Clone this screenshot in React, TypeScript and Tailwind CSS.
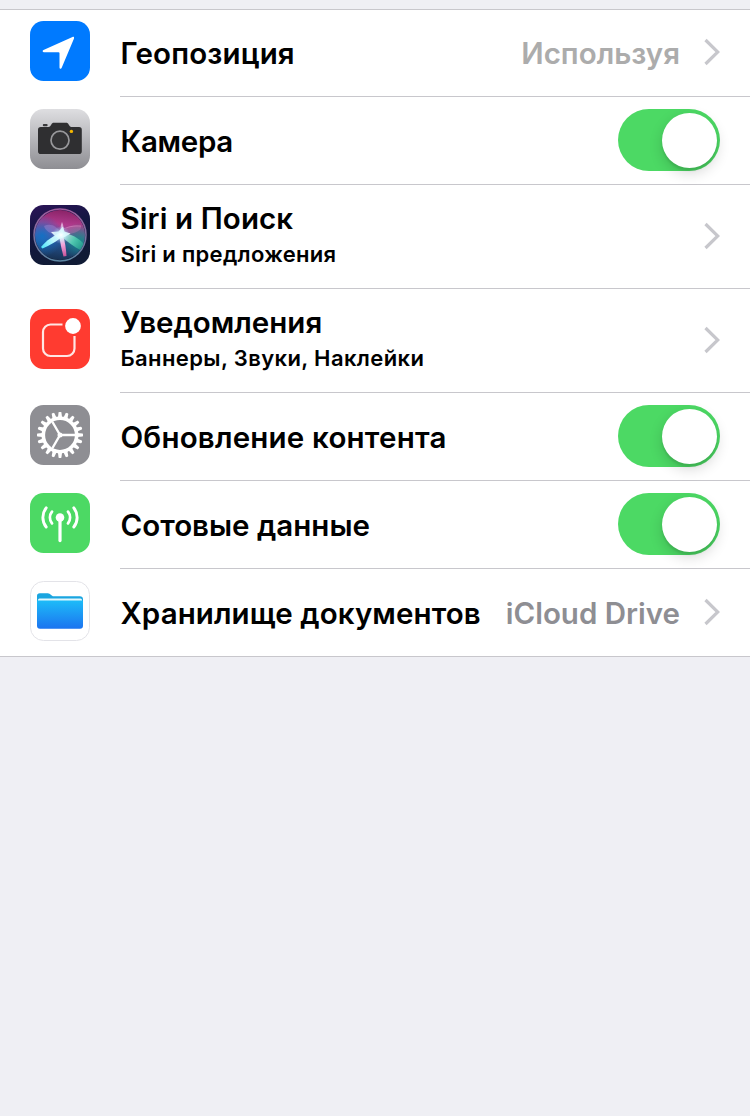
import React from 'react';
import clsx from 'clsx';

const LocationIcon = () => (
  <svg viewBox="0 0 60 60" className="size-[60px]">
    <rect width="60" height="60" rx="13.5" fill="#007aff" />
    <path d="M42.500 16c1.100-.5 1.900.3 1.500 1.400L31.700 46.800c-.6 1.300-2.200 1-2.200-.4V32.200q0-1-1-1H14c-1.600 0-1.800-1.600-.5-2.200Z" fill="#fff" />
  </svg>
);

const CameraIcon = () => (
  <svg viewBox="0 0 60 60" className="size-[60px]">
    <defs>
      <linearGradient id="cam" x1="0" y1="0" x2="0" y2="1">
        <stop offset="0" stopColor="#dedee1" />
        <stop offset="1" stopColor="#8e8e93" />
      </linearGradient>
    </defs>
    <rect width="60" height="60" rx="13.5" fill="url(#cam)" />
    <rect x="12.800" y="15" width="4.800" height="2.200" rx="1" fill="#39393b" />
    <path d="M10.800 18h7.700c1.500 0 2-1 2.700-2.200.8-1.400 1.300-2 2.800-2h12c1.500 0 2 .6 2.800 2 .7 1.200 1.200 2.200 2.700 2.200h7.500a2.800 2.800 0 0 1 2.800 2.800v21.400a2.800 2.800 0 0 1-2.800 2.800H10.800A2.800 2.800 0 0 1 8 42.200V20.800a2.800 2.800 0 0 1 2.800-2.800Z" fill="#2f2f31" />
    <circle cx="30" cy="31.200" r="9" fill="#333335" stroke="#98989b" strokeWidth="1.700" />
    <circle cx="41.400" cy="22.400" r="1.700" fill="#f5b700" />
  </svg>
);

const SiriIcon = () => (
  <svg viewBox="0 0 60 60" className="size-[60px]">
    <defs>
      <linearGradient id="siriBg" x1="0" y1="0" x2=".3" y2="1">
        <stop offset="0" stopColor="#2c1458" />
        <stop offset=".45" stopColor="#141642" />
        <stop offset="1" stopColor="#101b35" />
      </linearGradient>
      <linearGradient id="siriOrb" x1=".5" y1="0" x2=".4" y2="1">
        <stop offset="0" stopColor="#8a2468" />
        <stop offset=".28" stopColor="#b03a8c" />
        <stop offset=".5" stopColor="#7a4f9e" />
        <stop offset=".68" stopColor="#24508c" />
        <stop offset="1" stopColor="#173050" />
      </linearGradient>
      <radialGradient id="siriBlue" cx="12" cy="31" r="21" gradientUnits="userSpaceOnUse">
        <stop offset="0" stopColor="#1470c4" />
        <stop offset="1" stopColor="#1470c4" stopOpacity="0" />
      </radialGradient>
      <radialGradient id="siriTeal" cx="49" cy="36" r="18" gradientUnits="userSpaceOnUse">
        <stop offset="0" stopColor="#178a86" />
        <stop offset="1" stopColor="#178a86" stopOpacity="0" />
      </radialGradient>
      <radialGradient id="siriGlow" cx="31" cy="30" r="9" gradientUnits="userSpaceOnUse">
        <stop offset="0" stopColor="#fff" stopOpacity=".9" />
        <stop offset=".45" stopColor="#c6fbff" stopOpacity=".5" />
        <stop offset="1" stopColor="#6fd3ff" stopOpacity="0" />
      </radialGradient>
      <linearGradient id="siriLeft" x1="30" y1="30" x2="11" y2="43" gradientUnits="userSpaceOnUse">
        <stop offset="0" stopColor="#fff" />
        <stop offset="1" stopColor="#4be6fa" />
      </linearGradient>
      <linearGradient id="siriRight" x1="32" y1="30" x2="54" y2="42" gradientUnits="userSpaceOnUse">
        <stop offset="0" stopColor="#f2fffb" />
        <stop offset=".5" stopColor="#5fe3bd" />
        <stop offset="1" stopColor="#2bae92" stopOpacity=".7" />
      </linearGradient>
      <linearGradient id="siriTail" x1="30" y1="29" x2="35" y2="53" gradientUnits="userSpaceOnUse">
        <stop offset="0" stopColor="#fff" />
        <stop offset=".5" stopColor="#ee9bd4" />
        <stop offset="1" stopColor="#c2488f" />
      </linearGradient>
      <linearGradient id="siriRing" x1="0" y1="0" x2="0" y2="1">
        <stop offset="0" stopColor="#a05a9c" />
        <stop offset="1" stopColor="#5b86a3" />
      </linearGradient>
      <filter id="soft" x="-20%" y="-20%" width="140%" height="140%">
        <feGaussianBlur stdDeviation=".6" />
      </filter>
    </defs>
    <rect width="60" height="60" rx="13.5" fill="url(#siriBg)" />
    <circle cx="30" cy="30" r="25" fill="url(#siriOrb)" />
    <circle cx="30" cy="30" r="25" fill="url(#siriBlue)" />
    <circle cx="30" cy="30" r="25" fill="url(#siriTeal)" />
    <g filter="url(#soft)">
      <path d="M14 21c6-3 13-1 18 9-8 0-16-2-18-9Z" fill="#a98fdd" opacity=".4" />
      <path d="M31 29c3-7 11-10 20-8 1 5-8 9-20 8Z" fill="#d67bb6" opacity=".3" />
      <path d="M31 25.500c6-4 13-5 20-4.500" fill="none" stroke="#d98cc4" strokeWidth=".8" opacity=".7" />
      <path d="M32 17c2 4 2 8 0 13-2-4-2-9 0-13Z" fill="#f0d2f2" opacity=".7" />
      <path d="M31 27.500c-7 3-15 8-20 14.500l1.500 1.500c7-3 15-7.500 20-12Z" fill="url(#siriLeft)" />
      <path d="M32 27.500c9 1 17 6 22 11.500l-3.500 6c-6-3-13-8-18.500-13Z" fill="url(#siriRight)" opacity=".75" />
      <path d="M29 29c1 8 2.500 15 4.500 22.500l3-.5c-.5-8-1.500-15-4-22Z" fill="url(#siriTail)" />
      <path d="M21 27l7.500-.5 4.500-5 1.500 5 6 2-5 3-5 2-5-2Z" fill="#f4fdff" opacity=".9" />
      <circle cx="31" cy="30" r="9" fill="url(#siriGlow)" />
    </g>
    <circle cx="30" cy="30" r="26" fill="none" stroke="url(#siriRing)" strokeWidth="1.500" />
  </svg>
);

const NotificationsIcon = () => (
  <svg viewBox="0 0 60 60" className="size-[60px]">
    <rect width="60" height="60" rx="13.5" fill="#ff3b30" />
    <path d="M32.500 15.500H20.500a7.500 7.500 0 0 0-7.500 7.500v16.500a7.500 7.500 0 0 0 7.500 7.500H37a7.500 7.500 0 0 0 7.500-7.500V27" fill="none" stroke="#ffe6e4" strokeWidth="2.200" />
    <circle cx="43" cy="17" r="7.900" fill="#fff" />
  </svg>
);

const TEETH = Array.from({ length: 20 }, (_, i) => i * 18);

const GearIcon = () => (
  <svg viewBox="0 0 60 60" className="size-[60px]">
    <rect width="60" height="60" rx="13.5" fill="#8e8e93" />
    <g fill="none" stroke="#fff">
      <circle cx="30" cy="30" r="16.700" strokeWidth="3.600" />
      <path d="M30 30h15M30 30l-7.500-13M30 30l-7.500 13" strokeWidth="2.400" />
    </g>
    <circle cx="30" cy="30" r="2.500" fill="#fff" />
    {TEETH.map((a) => (
      <path key={a} d="M27.900 12.500 28.600 7.600q.15-.6.700-.6h1.400q.550 0 .7.600L32.100 12.500Z" transform={`rotate(${a} 30 30)`} fill="#fff" />
    ))}
  </svg>
);

const CellularIcon = () => (
  <svg viewBox="0 0 60 60" className="size-[60px]">
    <rect width="60" height="60" rx="13.5" fill="#4cd964" />
    <circle cx="30" cy="24.500" r="4.300" fill="#fff" />
    <g fill="none" stroke="#fff" strokeLinecap="round">
      <path d="M30 26v21.600" strokeWidth="3.200" />
      <path d="M22 18.700a9.300 9.300 0 0 0 0 11.600M38 18.700a9.300 9.300 0 0 1 0 11.600" strokeWidth="2.800" />
      <path d="M16.200 14.800a15.500 15.500 0 0 0 0 19.200M43.800 14.800a15.500 15.500 0 0 1 0 19.200" strokeWidth="2.900" />
    </g>
  </svg>
);

const FilesIcon = () => (
  <svg viewBox="0 0 60 60" className="size-[60px]">
    <defs>
      <linearGradient id="folder" x1="0" y1="0" x2="0" y2="1">
        <stop offset="0" stopColor="#1dbcf8" />
        <stop offset="1" stopColor="#1c74f0" />
      </linearGradient>
    </defs>
    <rect x=".5" y=".5" width="59" height="59" rx="13" fill="#fff" stroke="#e3e3e8" />
    <path d="M7 22V15a2.800 2.800 0 0 1 2.800-2.800h8c2.700 0 3.400 3.100 6 3.100h26a3.200 3.200 0 0 1 3.200 3.200V22Z" fill="#1aa5e0" />
    <path d="M9.500 17.400h41a1.500 1.500 0 0 1 1.500 1.500v2H8v-2a1.500 1.500 0 0 1 1.500-1.500Z" fill="#e3f7fd" />
    <path d="M7 19.400h46v25.300a3 3 0 0 1-3 3H10a3 3 0 0 1-3-3Z" fill="url(#folder)" />
  </svg>
);

const Chevron = () => (
  <svg viewBox="0 0 16 28" className="mt-0.5 ml-6 h-7 w-4 shrink-0">
    <path d="M1.500 2 13.800 14 1.500 26" fill="none" stroke="#c7c7cc" strokeWidth="3.200" />
  </svg>
);

const Toggle = () => (
  <button
    role="switch"
    aria-checked="true"
    className="mt-0.5 flex h-[62px] w-[102px] shrink-0 items-center justify-end rounded-full bg-[#4cd964] pr-[3px]"
  >
    <span className="size-[55px] rounded-full bg-white shadow-[0_5px_14px_rgba(0,0,0,0.16),0_3px_2px_rgba(0,0,0,0.08)]" />
  </button>
);

interface Row {
  icon: React.FC;
  title: string;
  titleClass: string;
  subtitle?: string;
  subtitleClass?: string;
  value?: string;
  valueClass?: string;
  toggle?: boolean;
}

const ROWS: Row[] = [
  { icon: LocationIcon, title: 'Геопозиция', titleClass: 'tracking-[0.15px]', value: 'Используя', valueClass: 'tracking-normal text-[#acacac]' },
  { icon: CameraIcon, title: 'Камера', titleClass: 'tracking-[-0.3px]', toggle: true },
  { icon: SiriIcon, title: 'Siri и Поиск', titleClass: 'tracking-[0.1px]', subtitle: 'Siri и предложения', subtitleClass: 'tracking-[0.3px]' },
  { icon: NotificationsIcon, title: 'Уведомления', titleClass: 'tracking-normal', subtitle: 'Баннеры, Звуки, Наклейки', subtitleClass: 'tracking-[0.38px]' },
  { icon: GearIcon, title: 'Обновление контента', titleClass: 'tracking-[0.2px]', toggle: true },
  { icon: CellularIcon, title: 'Сотовые данные', titleClass: 'tracking-normal', toggle: true },
  { icon: FilesIcon, title: 'Хранилище документов', titleClass: 'tracking-[0.1px]', value: 'iCloud Drive', valueClass: 'tracking-normal text-[#8e8e93]' },
];

const SettingsRow: React.FC<{ row: Row; last: boolean }> = ({ row, last }) => {
  const Icon = row.icon;

  return (
    <div className={clsx('flex bg-white pl-[30px]', row.subtitle ? 'h-[104px]' : 'h-[88px]', last && 'border-b border-[#c8c7cc]')}>
      <div className="flex w-[90px] shrink-0 items-center pb-1">
        <Icon />
      </div>
      <div className={clsx('flex min-w-0 flex-1 items-center pr-[30px] pb-[3px] whitespace-nowrap', !last && 'border-b border-[#c8c7cc]')}>
        <div className={clsx('flex-1 pl-[0.5px]', row.subtitle ? 'pt-0.5' : 'pt-1')}>
          <p className={clsx('text-[29.5px] leading-9 font-semibold text-black', row.titleClass)}>{row.title}</p>
          {row.subtitle && (
            <p className={clsx('text-[22px] leading-9 font-semibold text-black', row.subtitleClass)}>{row.subtitle}</p>
          )}
        </div>
        {row.value && <span className={clsx('pt-1 text-[29.5px] leading-9 font-semibold', row.valueClass)}>{row.value}</span>}
        {row.toggle ? <Toggle /> : <Chevron />}
      </div>
    </div>
  );
};

const App: React.FC = () => {
  return (
    <div className="min-h-screen bg-[#efeff4] font-['Inter','Liberation_Sans',sans-serif]">
      <div className="relative h-2.5 border-b border-[#c8c7cc] bg-[#efeff4]"></div>
      <div className="-mt-px">
        {ROWS.map((row, i) => (
          <SettingsRow key={row.title} row={row} last={i === ROWS.length - 1} />
        ))}
      </div>
    </div>
  );
};

export default App;
